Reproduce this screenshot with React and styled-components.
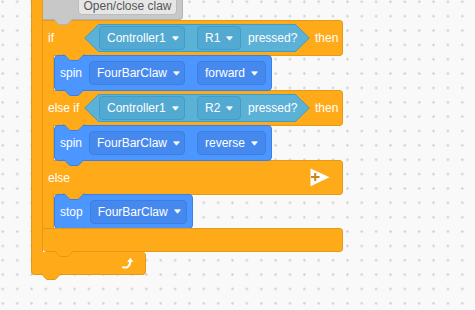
import React from "react";
import styled, { createGlobalStyle } from "styled-components";

const ORANGE = "#ffab19";
const ORANGE_EDGE = "#e39a18";
const BLUE = "#4c97ff";
const BLUE_EDGE = "#3b80e0";
const BLUE_FIELD = "#4689ee";
const SENSE = "#5cb1d6";
const SENSE_EDGE = "#409dc6";
const SENSE_FIELD = "#52aad2";
const GREY = "#c8c8c8";
const GREY_EDGE = "#b3b3b3";
const TEXT_SIZE = "12px";

const GlobalStyle = createGlobalStyle`
  html, body {
    margin: 0;
    padding: 0;
  }
  body {
    background-color: #f9f9f9;
    background-image: radial-gradient(circle, #d2d2d2 0.9px, transparent 1.5px);
    background-size: 14.37px 14.37px;
    background-position: -4.4px -5.4px;
    font-family: "Liberation Sans", Arial, sans-serif;
    overflow: hidden;
  }
`;

const Workspace = styled.div`
  display: flex;
  padding-left: 31px;
  min-height: 310px;
  box-sizing: border-box;
`;

const OuterBlock = styled.div`
  display: flex;
  flex-direction: column;
  align-items: flex-start;
`;

const OuterBody = styled.div`
  display: flex;
`;

const OuterArm = styled.div`
  width: 12px;
  box-sizing: border-box;
  background: ${ORANGE};
  border-left: 1px solid ${ORANGE_EDGE};
  border-right: 1px solid ${ORANGE_EDGE};
`;

const Stack = styled.div`
  display: flex;
  flex-direction: column;
  align-items: flex-start;
`;

const OuterFoot = styled.div`
  position: relative;
  display: flex;
  align-items: center;
  justify-content: flex-end;
  width: 115px;
  height: 23px;
  box-sizing: border-box;
  padding-right: 11px;
  background: ${ORANGE};
  border: 1px solid ${ORANGE_EDGE};
  border-top: none;
  border-radius: 0 4px 4px 4px;
`;

const GreyBlock = styled.div`
  position: relative;
  z-index: 2;
  display: flex;
  align-items: flex-end;
  width: 140px;
  height: 20px;
  box-sizing: border-box;
  padding: 0 0 4px 35px;
  background: ${GREY};
  border-right: 1px solid ${GREY_EDGE};
  border-bottom: 1px solid ${GREY_EDGE};
  border-radius: 0 0 4px 0;
`;

const MacroButton = styled.div`
  display: flex;
  align-items: center;
  justify-content: center;
  flex: none;
  width: 99px;
  height: 22px;
  box-sizing: border-box;
  background: #e6e6e6;
  border: 1px solid #bdbdbd;
  border-radius: 4px;
  color: #575757;
  font-size: ${TEXT_SIZE};
  padding-top: 3px;
  white-space: nowrap;
`;

const IfBlock = styled.div`
  display: flex;
  flex-direction: column;
  width: 300px;
`;

const Clause = styled.div`
  display: flex;
  align-items: center;
  height: ${(p) => p.$h}px;
  box-sizing: border-box;
  padding: 0 12px 0 5px;
  background: ${ORANGE};
  border: 1px solid ${ORANGE_EDGE};
  border-left: none;
  border-radius: 0 4px 4px 0;
  color: #fff;
  font-size: ${TEXT_SIZE};
`;

const Keyword = styled.span`
  flex: none;
  width: 36px;
  white-space: nowrap;
`;

const Then = styled.span`
  flex: none;
  margin-left: 5px;
`;

const Mouth = styled.div`
  display: flex;
  align-items: flex-start;
`;

const Arm = styled.div`
  position: relative;
  z-index: 1;
  align-self: stretch;
  width: 11px;
  margin: -1px 0;
  box-sizing: border-box;
  background: ${ORANGE};
  border-right: 1px solid ${ORANGE_EDGE};
`;

const Statement = styled.div`
  position: relative;
  z-index: 1;
  display: flex;
  align-items: center;
  gap: 7px;
  height: ${(p) => p.$h}px;
  margin: -1px 0;
  box-sizing: border-box;
  padding: 0 5px;
  background: ${BLUE};
  border: 1px solid ${BLUE_EDGE};
  border-radius: 4px;
  color: #fff;
  font-size: ${TEXT_SIZE};
`;

const Foot = styled.div`
  position: relative;
  z-index: 1;
  height: 24px;
  box-sizing: border-box;
  background: ${ORANGE};
  border: 1px solid ${ORANGE_EDGE};
  border-left: none;
  border-radius: 0 4px 4px 4px;
`;

const Boolean = styled.div`
  position: relative;
  flex: none;
  display: flex;
  align-items: center;
  width: 226px;
  height: 28px;
  box-sizing: border-box;
  padding-left: 15px;
  gap: 7px;
`;

const BooleanShape = styled.svg`
  position: absolute;
  left: 0;
  top: 0;
`;

const Field = styled.div`
  position: relative;
  flex: none;
  display: flex;
  align-items: center;
  gap: 6px;
  width: ${(p) => p.$w}px;
  height: 24px;
  box-sizing: border-box;
  padding: 0 9px 0 7px;
  background: ${(p) => (p.$sense ? SENSE_FIELD : BLUE_FIELD)};
  border: 1px solid ${(p) => (p.$sense ? SENSE_EDGE : BLUE_EDGE)};
  border-radius: 4px;
  color: #fff;
  white-space: nowrap;
  & + & {
    margin-left: 5px;
  }
`;

const Pressed = styled.span`
  position: relative;
  white-space: nowrap;
`;

const Caret = styled.svg`
  margin-left: auto;
  flex: none;
`;

const TabSvg = styled.svg`
  position: absolute;
  z-index: 2;
  left: ${(p) => p.$left}px;
  top: ${(p) => (p.$up ? "-1px" : "100%")};
  overflow: visible;
`;

const PlusIcon = styled.svg`
  margin-left: auto;
`;

function Tab({ fill, stroke, left = 8, up }) {
  return (
    <TabSvg $left={left} $up={up} width="22" height="6" viewBox="0 0 22 6">
      <path
        d="M0 0 C1.5 0 2.2 0.6 3 1.4 L5.6 4.4 C6.4 5.2 7 5.5 8 5.5 H14 C15 5.5 15.6 5.2 16.4 4.4 L19 1.4 C19.8 0.6 20.5 0 22 0"
        fill={fill}
        stroke={stroke}
        strokeWidth="1"
      />
    </TabSvg>
  );
}

function Dropdown({ w, sense, children }) {
  return (
    <Field $w={w} $sense={sense}>
      {children}
      <Caret width="7" height="5" viewBox="0 0 7 5">
        <path d="M0.6 0.8 H6.4 L3.5 4.2 Z" fill="#fff" stroke="#fff" strokeWidth="0.8" strokeLinejoin="round" />
      </Caret>
    </Field>
  );
}

function ButtonCondition({ button }) {
  return (
    <Boolean>
      <BooleanShape width="226" height="28" viewBox="0 0 226 28">
        <path d="M14.5 0.5 H211.5 L225.3 14 L211.5 27.5 H14.5 L0.7 14 Z" fill={SENSE} stroke={SENSE_EDGE} />
      </BooleanShape>
      <Dropdown w={86} sense>Controller1</Dropdown>
      <Dropdown w={44} sense>{button}</Dropdown>
      <Pressed>pressed?</Pressed>
    </Boolean>
  );
}

function Block({ label, fields, h = 36 }) {
  return (
    <Statement $h={h}>
      <Tab up fill={ORANGE} stroke={BLUE_EDGE} />
      <span>{label}</span>
      {fields.map(([text, w]) => (
        <Dropdown key={text} w={w}>{text}</Dropdown>
      ))}
      <Tab fill={BLUE} stroke={BLUE_EDGE} />
    </Statement>
  );
}

export default function App() {
  return (
    <>
      <GlobalStyle />
      <Workspace>
        <OuterBlock>
          <OuterBody>
            <OuterArm />
            <Stack>
              <GreyBlock>
                <MacroButton>Open/close claw</MacroButton>
                <Tab left={9} fill={GREY} stroke={GREY_EDGE} />
              </GreyBlock>
              <IfBlock>
                <Clause $h={36}>
                  <Keyword>if</Keyword>
                  <ButtonCondition button="R1" />
                  <Then>then</Then>
                </Clause>
                <Mouth>
                  <Arm />
                  <Block label="spin" fields={[["FourBarClaw", 96], ["forward", 69]]} />
                </Mouth>
                <Clause $h={36}>
                  <Keyword>else if</Keyword>
                  <ButtonCondition button="R2" />
                  <Then>then</Then>
                </Clause>
                <Mouth>
                  <Arm />
                  <Block label="spin" fields={[["FourBarClaw", 96], ["reverse", 69]]} />
                </Mouth>
                <Clause $h={35}>
                  <span>else</span>
                  <PlusIcon width="20" height="19" viewBox="0 0 20 19">
                    <path d="M0.5 0.5 L19.5 9.2 L0.5 18.2 Z" fill="#fff" />
                    <path d="M1 9 H9.5 M5.2 5 V13" stroke="#c9861a" strokeWidth="2" />
                  </PlusIcon>
                </Clause>
                <Mouth>
                  <Arm />
                  <Block label="stop" h={35} fields={[["FourBarClaw", 97]]} />
                </Mouth>
                <Foot>
                  <Tab left={10} fill={ORANGE} stroke={ORANGE_EDGE} />
                </Foot>
              </IfBlock>
            </Stack>
          </OuterBody>
          <OuterFoot>
            <svg width="12" height="12" viewBox="0 0 12 12">
              <path d="M1 10.2 C4.5 11.2 8 10 8.2 4.5" fill="none" stroke="#fff" strokeWidth="2" strokeLinecap="round" />
              <path d="M5.2 5 L8.3 0.8 L11.3 5 Z" fill="#fff" />
            </svg>
            <Tab fill={ORANGE} stroke={ORANGE_EDGE} />
          </OuterFoot>
        </OuterBlock>
      </Workspace>
    </>
  );
}
